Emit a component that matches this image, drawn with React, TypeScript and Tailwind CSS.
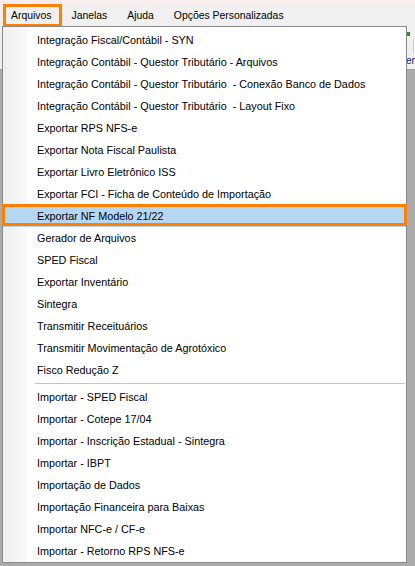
import React from "react";

const top1 = [
  "Integração Fiscal/Contábil - SYN",
  "Integração Contábil - Questor Tributário - Arquivos",
  "Integração Contábil - Questor Tributário  - Conexão Banco de Dados",
  "Integração Contábil - Questor Tributário  - Layout Fixo",
  "Exportar RPS NFS-e",
  "Exportar Nota Fiscal Paulista",
  "Exportar Livro Eletrônico ISS",
  "Exportar FCI - Ficha de Conteúdo de Importação",
  "Exportar NF Modelo 21/22",
  "Gerador de Arquivos",
  "SPED Fiscal",
  "Exportar Inventário",
  "Sintegra",
  "Transmitir Receituários",
  "Transmitir Movimentação de Agrotóxico",
  "Fisco Redução Z",
];

const top2 = [
  "Importar - SPED Fiscal",
  "Importar - Cotepe 17/04",
  "Importar - Inscrição Estadual - Sintegra",
  "Importar - IBPT",
  "Importação de Dados",
  "Importação Financeira para Baixas",
  "Importar NFC-e / CF-e",
  "Importar - Retorno RPS NFS-e",
];

const font = { fontFamily: '"Liberation Sans", Arial, sans-serif' };

function Item({ label }: { label: string }) {
  const hl = label === "Exportar NF Modelo 21/22";
  return (
    <div
      className={`relative h-[22px] flex items-center pl-[34px] whitespace-pre text-[10.8px] text-[#000] ${
        hl ? "bg-[#b5d7f3]" : ""
      }`}
    >
      {label}
      {hl && (
        <span className="absolute -left-[1px] -right-[1px] -top-[1px] bottom-[1px] border-[3px] border-[#ff7f00] pointer-events-none" />
      )}
    </div>
  );
}

export default function App() {
  return (
    <div className="w-[415px] h-[566px] overflow-hidden flex flex-col bg-[#f0f0f0]" style={font}>
      <div className="h-[5px] bg-[#f9eeee]" />
      <div className="h-[22px] flex items-center text-[10.4px] text-black bg-[#f0f0f0]">
        <div className="relative h-full flex items-center pl-[11px] pr-[10px]">
          Arquivos
          <span className="absolute left-[3px] right-[-1px] -top-[1px] bottom-0 border-[3px] border-[#ff7f00]" />
        </div>
        <div className="h-full flex items-center px-[10px]">Janelas</div>
        <div className="h-full flex items-center px-[10px]">Ajuda</div>
        <div className="h-full flex items-center px-[10px]">Opções Personalizadas</div>
      </div>
      <div className="relative flex-1 flex flex-col">
        <div className="h-[43px] bg-[#f0f0f0] border-b border-[#a0a0a0] flex justify-end">
          <div className="w-[8px] flex flex-col pt-[5px] gap-[3px] overflow-hidden">
            <div className="flex">
              <div className="w-[3px] h-[4px] bg-[#1a9a1a]" />
            </div>
            <div className="h-[14px] border-l border-[#c8c8c8] bg-white ml-[6px]" />
            <div className="text-[10px] leading-[10px] text-[#10208a] -ml-[1px] whitespace-nowrap">ene</div>
          </div>
        </div>
        <div className="flex-1 bg-[#ababab]" />
        <div className="absolute left-[2px] top-[-1px] w-[405px] h-[537px] border border-[#8a8a8a] bg-white flex">
          <div className="absolute left-0 top-0 bottom-0 w-[24px] bg-gradient-to-r from-[#efefef] to-[#f9f9f9]" />
          <div className="relative flex-1 flex flex-col pt-[2px]">
            {top1.map((t) => (
              <Item key={t} label={t} />
            ))}
            <div className="h-[5px] flex items-center pl-[32px] pr-[1px]">
              <div className="h-px w-full bg-[#c5c5c5]" />
            </div>
            {top2.map((t) => (
              <Item key={t} label={t} />
            ))}
          </div>
        </div>
      </div>
    </div>
  );
}
